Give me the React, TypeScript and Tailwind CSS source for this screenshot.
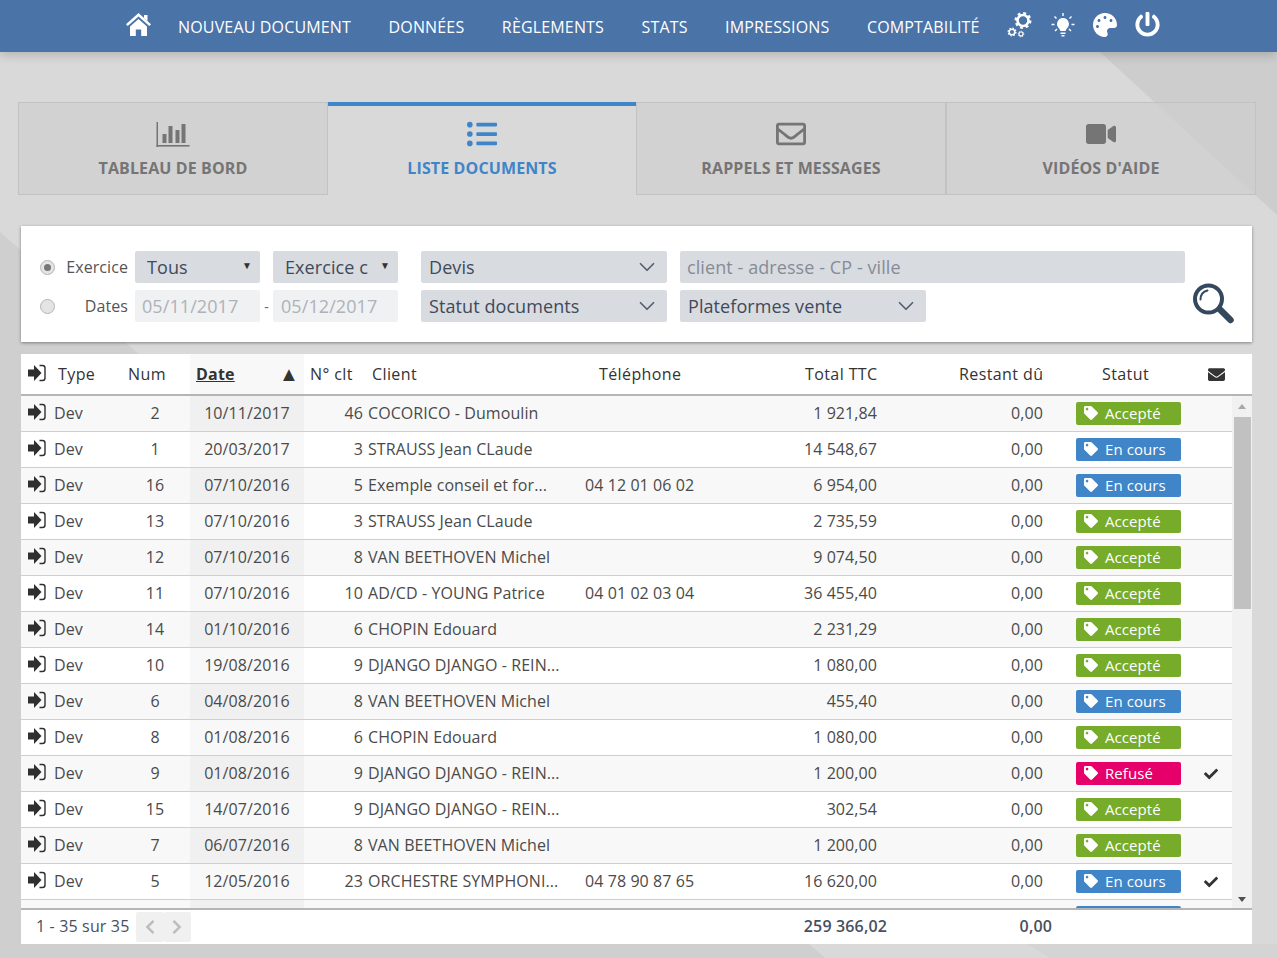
import { ChevronDown } from 'lucide-react';
import {
  FaCheck,
  FaChevronLeft,
  FaChevronRight,
  FaEnvelope,
  FaListUl,
  FaPalette,
  FaPowerOff,
  FaRegEnvelope,
  FaTag,
  FaVideo,
} from 'react-icons/fa';

type Statut = 'Accepté' | 'En cours' | 'Refusé';

const rows: [string, string, string, string, string, string, string, Statut, boolean][] = [
  ['2', '10/11/2017', '46', 'COCORICO - Dumoulin', '', '1 921,84', '0,00', 'Accepté', false],
  ['1', '20/03/2017', '3', 'STRAUSS Jean CLaude', '', '14 548,67', '0,00', 'En cours', false],
  ['16', '07/10/2016', '5', 'Exemple conseil et for...', '04 12 01 06 02', '6 954,00', '0,00', 'En cours', false],
  ['13', '07/10/2016', '3', 'STRAUSS Jean CLaude', '', '2 735,59', '0,00', 'Accepté', false],
  ['12', '07/10/2016', '8', 'VAN BEETHOVEN Michel', '', '9 074,50', '0,00', 'Accepté', false],
  ['11', '07/10/2016', '10', 'AD/CD - YOUNG Patrice', '04 01 02 03 04', '36 455,40', '0,00', 'Accepté', false],
  ['14', '01/10/2016', '6', 'CHOPIN Edouard', '', '2 231,29', '0,00', 'Accepté', false],
  ['10', '19/08/2016', '9', 'DJANGO DJANGO - REIN...', '', '1 080,00', '0,00', 'Accepté', false],
  ['6', '04/08/2016', '8', 'VAN BEETHOVEN Michel', '', '455,40', '0,00', 'En cours', false],
  ['8', '01/08/2016', '6', 'CHOPIN Edouard', '', '1 080,00', '0,00', 'Accepté', false],
  ['9', '01/08/2016', '9', 'DJANGO DJANGO - REIN...', '', '1 200,00', '0,00', 'Refusé', true],
  ['15', '14/07/2016', '9', 'DJANGO DJANGO - REIN...', '', '302,54', '0,00', 'Accepté', false],
  ['7', '06/07/2016', '8', 'VAN BEETHOVEN Michel', '', '1 200,00', '0,00', 'Accepté', false],
  ['5', '12/05/2016', '23', 'ORCHESTRE SYMPHONI...', '04 78 90 87 65', '16 620,00', '0,00', 'En cours', true],
];

const badgeColor: Record<Statut, string> = {
  Accepté: 'bg-[#76ac2a]',
  'En cours': 'bg-[#3f85c8]',
  Refusé: 'bg-[#e5006a]',
};

function NavLink({ children }: { children: string }) {
  return <a className="text-[16px] leading-none tracking-[0.16px] text-white">{children}</a>;
}

function HomeIcon() {
  return (
    <svg width="25" height="23" viewBox="0 0 25 23" fill="white">
      <path d="M12.500 0L25 11.200l-1.700 1.900L12.500 3.500 1.700 13.100 0 11.200z" />
      <path d="M18 2h3.500v6L18 5z" />
      <path d="M4 13.500l8.500-7.500 8.500 7.500V23h-5.800v-6.500H9.800V23H4z" />
    </svg>
  );
}

function Gear({ cx, cy, r, sw }: { cx: number; cy: number; r: number; sw: number }) {
  // teeth are a dashed ring round the wheel
  const outer = r + sw * 0.7;
  const dash = (2 * Math.PI * outer) / 16;
  return (
    <g fill="none" stroke="white">
      <circle cx={cx} cy={cy} r={r} strokeWidth={sw} />
      <circle cx={cx} cy={cy} r={outer} strokeWidth={sw * 0.9} strokeDasharray={`${dash} ${dash}`} />
    </g>
  );
}

function CogsIcon() {
  return (
    <svg width="26" height="27" viewBox="0 0 26 27">
      <Gear cx={16} cy={9.500} r={5.500} sw={2.600} />
      <Gear cx={5} cy={21} r={2.800} sw={1.500} />
      <Gear cx={14} cy={23} r={2} sw={1.100} />
    </svg>
  );
}

function BarsIcon() {
  return (
    <svg width="34" height="26" viewBox="0 0 34 26" fill="currentColor">
      <rect x="0.500" y="1" width="1.500" height="25" />
      <rect x="0.500" y="24" width="33" height="1.600" />
      <rect x="6.500" y="13" width="4" height="9" />
      <rect x="12.500" y="5" width="4" height="17" />
      <rect x="19.500" y="9" width="4" height="13" />
      <rect x="25.500" y="3" width="4" height="19" />
    </svg>
  );
}

function BulbIcon() {
  return (
    <svg width="24" height="26" viewBox="0 0 24 26" fill="none" stroke="white" strokeWidth="1.400">
      <path d="M12 1v3M3.500 4.500l2 2M20.500 4.500l-2 2M0.500 12.500h3M20.500 12.500h3M4 19l2-2M20 19l-2-2" />
      <path
        d="M12 6a6 6 0 0 0-4 10.400c1 1 1.300 2 1.300 2.600h5.400c0-.6.300-1.600 1.300-2.600A6 6 0 0 0 12 6z"
        fill="white"
        stroke="none"
      />
      <path d="M9.500 20.500h5v1.500h-5zM10.500 23h3v1.500h-3z" fill="white" stroke="none" />
    </svg>
  );
}

function SearchIcon() {
  return (
    <svg width="42" height="42" viewBox="0 0 42 42" fill="none" className="text-[#34495e]">
      <circle cx="16.500" cy="16" r="13.500" stroke="currentColor" strokeWidth="4" />
      <path d="M8.500 16.500c0-5 3-8 7-9" stroke="currentColor" strokeWidth="2" strokeLinecap="round" />
      <path d="M28 26.500l10.500 10.500" stroke="currentColor" strokeWidth="6.500" strokeLinecap="round" />
    </svg>
  );
}

function SignInIcon() {
  return (
    <svg width="18" height="18" viewBox="0 0 18 18" className="shrink-0 text-[#2f2f2f]">
      <path d="M0 5.500h6V1l7.500 8L6 17v-4.500H0z" fill="currentColor" />
      <path d="M11.500 1.500h3a2.500 2.500 0 0 1 2.500 2.500v10a2.500 2.500 0 0 1-2.500 2.500h-3" fill="none" stroke="currentColor" strokeWidth="1.400" />
    </svg>
  );
}

function Tab({
  icon,
  label,
  active,
}: {
  icon: React.ReactNode;
  label: string;
  active?: boolean;
}) {
  return (
    <div
      className={
        active
          ? 'flex h-[93px] flex-1 flex-col items-center border-t-[4px] border-[#3f85c8] pt-[14px] text-[#3f85c8]'
          : 'flex h-[93px] flex-1 flex-col items-center border border-[#c2c2c2] bg-[#cecece]/70 pt-[17px] text-[#757575]'
      }
    >
      <div className="flex h-[28px] items-center">{icon}</div>
      <div className="mt-[9px] text-[16px] leading-[22px] font-bold tracking-[0.12px]">{label}</div>
    </div>
  );
}

function Radio({ checked }: { checked?: boolean }) {
  return (
    <div className="flex h-[15px] w-[15px] items-center justify-center rounded-full border border-[#b5b5b5] bg-[#e4e4e4]">
      {checked && <div className="h-[7px] w-[7px] rounded-full bg-[#777]" />}
    </div>
  );
}

function MiniSelect({ label, className }: { label: string; className: string }) {
  return (
    <div className={`flex h-[32px] items-center justify-between rounded-[2px] bg-[#d8dbe0] pr-[8px] pl-[12px] text-[18px] text-[#3f4a5a] ${className}`}>
      <span>{label}</span>
      <span className="mb-[4px] text-[10px] text-[#333]">▼</span>
    </div>
  );
}

function BigSelect({ label, className }: { label: string; className: string }) {
  return (
    <div className={`flex h-[32px] items-center justify-between rounded-[2px] bg-[#d8dbe0] pr-[7px] pl-[8px] text-[18px] text-[#3f4a5a] ${className}`}>
      <span>{label}</span>
      <ChevronDown size={26} strokeWidth={1.600} className="text-[#566170]" />
    </div>
  );
}

function Row({ row, index }: { row: (typeof rows)[number]; index: number }) {
  const [num, date, clt, client, tel, total, reste, statut, sent] = row;
  return (
    <div className={`flex h-[36px] shrink-0 items-center border-b border-[#cfcfcf] pb-[2px] text-[16px] tracking-[0.08px] text-[#4a4a4a] ${index % 2 === 0 ? 'bg-[#f8f8f8]' : 'bg-white'}`}>
      <div className="mb-[2px] ml-[7px]"><SignInIcon /></div>
      <span className="ml-[8px] w-[66px]">Dev</span>
      <span className="w-[70px] text-center">{num}</span>
      <span className={`mb-[-2px] flex h-[calc(100%+2px)] w-[114px] items-center justify-center pb-[2px] ${index % 2 === 0 ? 'bg-[#f0f0f0]' : 'bg-[#f8f8f8]'}`}>
        {date}
      </span>
      <span className="w-[59px] text-right">{clt}</span>
      <span className="ml-[5px] w-[217px]">{client}</span>
      <span className="w-[170px]">{tel}</span>
      <span className="w-[122px] text-right">{total}</span>
      <span className="w-[166px] text-right">{reste}</span>
      <span className={`mt-[2px] ml-[33px] flex h-[23px] w-[105px] items-center rounded-[2px] pb-[1px] pl-[8px] text-[15px] text-white ${badgeColor[statut]}`}>
        <FaTag size={14} />
        <span className="ml-[7px]">{statut}</span>
      </span>
      {sent && <FaCheck size={14} className="mt-[2px] ml-[23px] text-[#333]" />}
    </div>
  );
}

export default function App() {
  return (
    <div className="relative h-[958px] w-[1277px] overflow-hidden bg-[#d9d9d9] font-['Open_Sans',sans-serif]">
      <svg className="absolute inset-0" width="1277" height="958" viewBox="0 0 1277 958">
        <polygon points="1100,52 1277,52 1277,215" fill="#cdcdcd" />
        <polygon points="0,232 825,958 0,958" fill="#cfcfcf" />
        <polygon points="1027,944 1277,944 1277,958 1050,958" fill="#d4d4d4" />
      </svg>

      <div className="relative flex h-[52px] items-center bg-[#4a73a8] pl-[126px] shadow-[0_3px_10px_rgba(0,0,0,0.18)]">
        <div className="mb-[4px]"><HomeIcon /></div>
        <div className="mb-[-1px] ml-[27px] flex items-center gap-[37.500px]">
          <NavLink>NOUVEAU DOCUMENT</NavLink>
          <NavLink>DONNÉES</NavLink>
          <NavLink>RÈGLEMENTS</NavLink>
          <NavLink>STATS</NavLink>
          <NavLink>IMPRESSIONS</NavLink>
          <NavLink>COMPTABILITÉ</NavLink>
        </div>
        <div className="mb-[3px] ml-[27px] flex items-center gap-[18px] text-white">
          <CogsIcon />
          <BulbIcon />
          <FaPalette size={24} />
          <FaPowerOff size={25} />
        </div>
      </div>

      <div className="relative mt-[50px] ml-[18px] flex w-[1238px]">
        <Tab icon={<BarsIcon />} label="TABLEAU DE BORD" />
        <Tab icon={<FaListUl size={30} />} label="LISTE DOCUMENTS" active />
        <Tab icon={<FaRegEnvelope size={30} />} label="RAPPELS ET MESSAGES" />
        <Tab icon={<FaVideo size={30} />} label="VIDÉOS D'AIDE" />
      </div>

      <div className="relative mt-[31px] ml-[21px] flex h-[116px] w-[1231px] bg-white pt-[25px] tracking-[0.08px] shadow-[0_1px_3px_rgba(0,0,0,0.4)]">
        <div className="flex flex-col gap-[7px]">
          <div className="flex h-[32px] items-center">
            <div className="ml-[19px]"><Radio checked /></div>
            <span className="ml-[11px] w-[62px] text-right text-[16px] text-[#555]">Exercice</span>
            <MiniSelect label="Tous" className="ml-[7px] w-[125px]" />
            <MiniSelect label="Exercice c" className="ml-[13px] w-[125px]" />
          </div>
          <div className="flex h-[32px] items-center">
            <div className="ml-[19px]"><Radio /></div>
            <span className="ml-[11px] w-[62px] text-right text-[16px] text-[#555]">Dates</span>
            <div className="ml-[7px] flex h-[32px] w-[125px] items-center rounded-[2px] bg-[#f0f1f3] pl-[7px] text-[18px] text-[#aeb2b8]">05/11/2017</div>
            <span className="w-[13px] text-center text-[14px] text-[#666]">-</span>
            <div className="flex h-[32px] w-[125px] items-center rounded-[2px] bg-[#f0f1f3] pl-[8px] text-[18px] text-[#aeb2b8]">05/12/2017</div>
          </div>
        </div>
        <div className="ml-[23px] flex flex-col gap-[7px]">
          <div className="flex gap-[13px]">
            <BigSelect label="Devis" className="w-[246px]" />
            <div className="flex h-[32px] w-[505px] items-center rounded-[2px] bg-[#d8dbe0] pl-[7px] text-[18px] text-[#868c96]">client - adresse - CP - ville</div>
          </div>
          <div className="flex gap-[13px]">
            <BigSelect label="Statut documents" className="w-[246px]" />
            <BigSelect label="Plateformes vente" className="w-[246px]" />
          </div>
        </div>
        <div className="mt-[32px] ml-[7px]"><SearchIcon /></div>
      </div>

      <div className="relative mt-[12px] ml-[21px] flex h-[590px] w-[1231px] flex-col bg-white">
        <div className="flex h-[42px] shrink-0 items-center border-b-2 border-[#b5b5b5] text-[16px] tracking-[0.4px] text-[#333]">
          <div className="mb-[2px] ml-[7px]"><SignInIcon /></div>
          <span className="ml-[12px] w-[70px]">Type</span>
          <span className="w-[62px]">Num</span>
          <span className="flex h-full w-[114px] items-center justify-between bg-[#f8f8f8] pr-[5px] pl-[6px] font-bold tracking-[0.2px]">
            <span className="underline">Date</span>
            <span className="text-[20px] font-normal">▲</span>
          </span>
          <span className="ml-[6px] w-[62px]">N° clt</span>
          <span className="w-[227px]">Client</span>
          <span className="w-[206px]">Téléphone</span>
          <span className="w-[72px] whitespace-nowrap">Total TTC</span>
          <span className="ml-[82px] w-[84px] whitespace-nowrap text-right">Restant dû</span>
          <span className="ml-[59px] w-[48px]">Statut</span>
          <FaEnvelope size={17} className="ml-[58px]" />
        </div>

        <div className="flex min-h-0 flex-1 overflow-hidden">
          <div className="flex min-w-0 flex-1 flex-col overflow-hidden">
            {rows.map((row, i) => (
              <Row key={row[0]} row={row} index={i} />
            ))}
            <div className="flex h-[36px] shrink-0 bg-[#f8f8f8]">
              <div className="ml-[169px] h-full w-[114px] bg-[#f0f0f0]" />
              <div className="mt-[6px] ml-[772px] h-[23px] w-[105px] rounded-[2px] bg-[#3f85c8]" />
            </div>
          </div>
          <div className="flex w-[20px] shrink-0 flex-col items-center bg-[#f1f1f1]">
            <div className="mt-[8px] mb-[8px] h-0 w-0 border-x-[4px] border-b-[5px] border-x-transparent border-b-[#a8a8a8]" />
            <div className="h-[192px] w-[17px] bg-[#c1c1c1]" />
            <div className="mt-auto mb-[6px] h-0 w-0 border-x-[4px] border-t-[5px] border-x-transparent border-t-[#505050]" />
          </div>
        </div>

        <div className="flex h-[36px] shrink-0 items-center border-t-2 border-[#b5b5b5] pb-[1px] text-[16px] tracking-[0.15px] text-[#46505e]">
          <span className="mb-[2px] ml-[15px] w-[100px]">1 - 35 sur 35</span>
          <div className="flex h-[30px] w-[55px] text-[#bdbdbd]">
            <div className="flex flex-1 items-center justify-center rounded-[2px] bg-[#f0f0f0]"><FaChevronLeft size={16} /></div>
            <div className="flex flex-1 items-center justify-center rounded-[2px] bg-[#f0f0f0]"><FaChevronRight size={16} /></div>
          </div>
          <span className="mb-[2px] ml-[595px] w-[101px] text-right font-semibold">259 366,02</span>
          <span className="mb-[2px] w-[165px] text-right font-semibold">0,00</span>
        </div>
      </div>
    </div>
  );
}
